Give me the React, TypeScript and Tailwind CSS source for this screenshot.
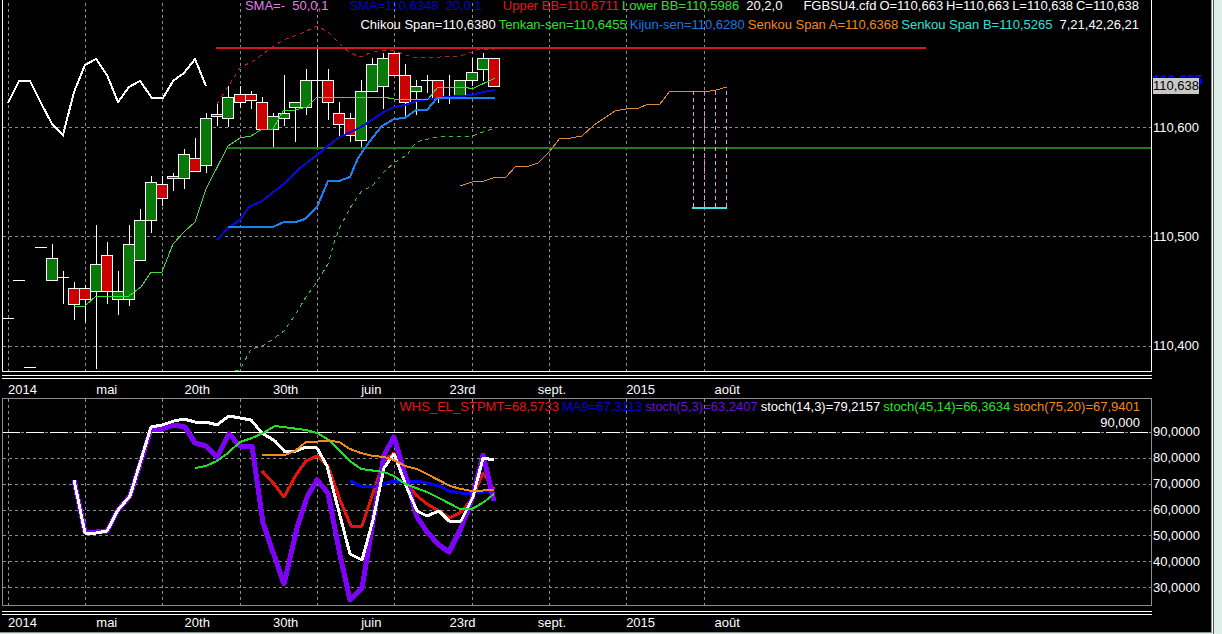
import { clsx } from 'clsx';

const timeLabels = ['2014', 'mai', '20th', '30th', 'juin', '23rd', 'sept.', '2015', 'août'];
const priceLabels = ['110,600', '110,500', '110,400'];
const stochLabels = ['90,0000', '80,0000', '70,0000', '60,0000', '50,0000', '40,0000', '30,0000'];

const gridX = [8, 85, 162, 240, 317, 394, 472, 549, 626, 704];
const priceGridY = [127, 236, 346];
const stochGridY = [432, 458, 484, 510, 535, 561, 587];

// [x, high, top, bottom, low, type] with u = up, d = down
type Candle = [number, number, number, number, number, 'u' | 'd'];

const candles: Candle[] = [
  [8, 318, 318, 318, 318, 'u'],
  [19, 280, 280, 280, 280, 'u'],
  [30, 367, 367, 367, 367, 'u'],
  [41, 247, 247, 247, 247, 'u'],
  [52, 244, 258, 280, 280, 'u'],
  [63, 271, 277, 277, 303, 'u'],
  [74, 282, 288, 304, 319, 'd'],
  [85, 285, 288, 299, 321, 'd'],
  [96, 225, 264, 291, 368, 'u'],
  [107, 242, 255, 291, 303, 'd'],
  [118, 271, 291, 299, 314, 'u'],
  [129, 225, 244, 299, 305, 'u'],
  [140, 209, 220, 260, 260, 'u'],
  [151, 176, 182, 220, 232, 'u'],
  [162, 176, 184, 198, 205, 'd'],
  [173, 173, 176, 178, 190, 'u'],
  [184, 149, 154, 178, 188, 'u'],
  [195, 138, 158, 171, 171, 'd'],
  [206, 113, 118, 165, 172, 'u'],
  [217, 102, 114, 116, 125, 'd'],
  [228, 86, 97, 118, 126, 'u'],
  [240, 86, 94, 102, 107, 'd'],
  [251, 91, 94, 100, 108, 'd'],
  [262, 97, 102, 129, 129, 'd'],
  [273, 113, 116, 129, 147, 'u'],
  [284, 75, 113, 118, 125, 'u'],
  [295, 102, 102, 107, 141, 'u'],
  [306, 69, 80, 107, 114, 'u'],
  [317, 49, 80, 80, 147, 'u'],
  [328, 69, 80, 102, 119, 'd'],
  [339, 102, 113, 124, 136, 'd'],
  [350, 113, 118, 135, 141, 'd'],
  [361, 80, 91, 140, 147, 'u'],
  [372, 58, 64, 91, 91, 'u'],
  [383, 53, 58, 86, 108, 'u'],
  [394, 53, 53, 75, 75, 'd'],
  [405, 64, 75, 102, 116, 'd'],
  [416, 80, 86, 91, 114, 'u'],
  [427, 75, 80, 80, 92, 'u'],
  [438, 80, 80, 97, 102, 'd'],
  [449, 75, 97, 97, 103, 'u'],
  [460, 80, 80, 97, 97, 'u'],
  [472, 58, 72, 80, 85, 'u'],
  [483, 53, 58, 69, 80, 'u'],
  [494, 58, 58, 86, 86, 'd'],
];

const chikou =
  '8,103 19,81 30,81 41,103 52,124 63,135 74,92 85,65 96,59 107,75 118,102 129,87 140,81 152,98 163,98 173,81 184,73 195,59 206,86';
const upperBand =
  '217,104 229,85 240,68 255,60 268,50 283,40 300,34 317,26 328,32 339,43 350,53 361,57 372,52 384,50 395,51 406,55 417,58 440,57 460,56 472,52 480,49 494,49';
const lowerBand =
  '235,370 240,370 251,349 262,346 272,340 284,331 295,315 306,297 317,282 328,264 335,240 340,227 350,208 361,192 373,185 384,172 395,162 407,155 416,142 428,139 438,137 472,136 483,132 495,128';
const tenkan =
  '74,306 85,306 96,296 129,296 141,287 151,272 162,272 173,244 184,232 195,222 206,189 228,146 240,138 251,136 262,129 273,129 283,111 295,110 307,107 317,97 383,97 394,99 428,99 438,87 465,87 472,89 495,78';
const sma =
  '217,240 228,228 240,220 249,207 262,201 285,183 300,168 317,155 338,138 361,127 384,112 394,107 405,105 417,101 428,99 438,98 460,96 472,95 483,92 495,90';
const kijun =
  '228,227 273,227 284,222 296,222 305,219 317,207 328,181 339,181 350,177 358,158 370,141 382,126 394,119 405,118 416,110 427,110 437,98 495,98';
const senkouA =
  '460,186 472,182 484,181 493,178 506,177 516,166 529,166 538,163 549,152 560,138 571,138 582,136 594,125 615,111 626,109 639,108 648,104 660,104 670,91 693,91 704,92 716,90 727,87';

const stochLines = [
  {
    name: 'whs',
    color: '#e8140c',
    width: 3,
    points:
      '262,471 274,484 284,497 296,475 306,461 317,456 328,466 340,500 351,526 362,526 375,487 384,461 394,453 406,480 416,495 427,504 439,511 450,518 461,512 472,499 483,473 494,489',
  },
  {
    name: 'ma9',
    color: '#0000ff',
    width: 3,
    points: '350,481 361,486 373,487 384,484 394,481 417,481 427,483 439,486 449,491 461,493 472,493 494,491',
  },
  {
    name: 'stoch5',
    color: '#7f00ff',
    width: 5,
    points:
      '74,480 85,532 96,532 107,531 118,510 130,496 151,429 162,429 174,425 185,427 195,443 206,446 217,457 229,434 240,446 252,446 263,523 284,584 297,528 307,497 317,480 328,493 340,555 350,600 362,588 384,455 394,437 407,481 417,517 427,532 439,545 449,552 461,528 472,499 483,455 494,501',
  },
  {
    name: 'stoch14',
    color: '#ffffff',
    width: 3,
    points:
      '74,480 85,533 96,533 107,531 118,510 130,496 151,427 162,425 174,421 184,419 195,422 206,422 217,425 229,416 240,418 251,420 262,433 275,441 285,452 296,451 306,447 317,448 327,466 350,554 362,560 373,520 384,468 394,454 407,488 417,511 427,516 439,511 449,521 461,521 473,497 483,458 494,460',
  },
  {
    name: 'stoch45',
    color: '#22e022',
    width: 2,
    points:
      '195,468 206,466 217,461 228,453 240,442 252,438 263,433 275,426 306,430 317,433 329,440 340,451 350,461 361,469 384,472 394,476 405,484 427,492 439,498 460,509 472,509 484,502 494,494',
  },
  {
    name: 'stoch75',
    color: '#f08a18',
    width: 2,
    points:
      '262,455 285,455 295,451 306,442 330,441 339,442 350,449 361,453 373,456 384,457 394,460 405,466 417,469 427,474 450,486 461,489 472,491 494,490',
  },
];

function Grid({ ys, top, bottom }: { ys: number[]; top: number; bottom: number }) {
  return (
    <g stroke="#8c8c8c" strokeDasharray="3 3">
      {gridX.map((x) => (
        <line key={x} x1={x + 0.5} x2={x + 0.5} y1={top} y2={bottom} />
      ))}
      {ys.map((y) => (
        <line key={y} x1={3} x2={1151} y1={y + 0.5} y2={y + 0.5} />
      ))}
    </g>
  );
}

function CandleShape({ candle }: { candle: Candle }) {
  const [x, high, top, bottom, low, type] = candle;
  const fill = type === 'u' ? '#087808' : '#cc0000';
  return (
    <g stroke="#ffffff">
      {low > high && <line x1={x + 0.5} x2={x + 0.5} y1={high} y2={low + 1} />}
      {top === bottom ? (
        <line x1={x - 6} x2={x + 6} y1={top + 0.5} y2={top + 0.5} />
      ) : (
        <rect x={x - 5.5} y={top + 0.5} width={11} height={bottom - top} fill={fill} />
      )}
    </g>
  );
}

function PriceChart() {
  return (
    <svg
      className="col-start-1 row-start-1 h-full w-full"
      viewBox="2 0 1149 371"
      preserveAspectRatio="none"
      shapeRendering="crispEdges"
      fill="none"
    >
      <Grid ys={priceGridY} top={3} bottom={371} />
      {candles.map((c) => (
        <CandleShape key={c[0]} candle={c} />
      ))}
      <line x1={228} x2={1151} y1={148} y2={148} stroke="#237a1c" strokeWidth={2} />
      <polyline points={upperBand} stroke="#c01c1c" strokeDasharray="4 4" />
      <polyline points={lowerBand} stroke="#30c830" strokeDasharray="4 4" />
      <polyline points={sma} stroke="#0808d8" strokeWidth={2} />
      <polyline points={kijun} stroke="#1880f0" strokeWidth={2} />
      <polyline points={tenkan} stroke="#38e038" />
      <polyline points={chikou} stroke="#ffffff" strokeWidth={2} />
      <polyline points={senkouA} stroke="#e08a38" />
      {[693, 704, 715, 726].map((x) => (
        <line key={x} x1={x + 0.5} x2={x + 0.5} y1={91} y2={207} stroke="#e890e8" strokeDasharray="4 3" />
      ))}
      <line x1={692} x2={727} y1={208} y2={208} stroke="#40e4e4" strokeWidth={2} />
      <line x1={216} x2={926} y1={48} y2={48} stroke="#d01820" strokeWidth={2} />
    </svg>
  );
}

function StochChart() {
  return (
    <svg
      className="col-start-1 row-start-1 h-full w-full"
      viewBox="2 398 1150 208"
      preserveAspectRatio="none"
      shapeRendering="crispEdges"
      strokeLinejoin="round"
      fill="none"
    >
      <Grid ys={stochGridY} top={399} bottom={605} />
      <line x1={2} x2={1151} y1={432.5} y2={432.5} stroke="#ffffff" strokeDasharray="18 6" />
      {stochLines.map((l) => (
        <polyline key={l.name} points={l.points} stroke={l.color} strokeWidth={l.width} />
      ))}
      <rect x={2.5} y={398.5} width={1149} height={207} stroke="#8c8c8c" />
    </svg>
  );
}

function TimeAxis({ className }: { className?: string }) {
  return (
    <div>
      <div className="h-1 border-y border-white" />
      <div className={clsx('grid grid-cols-13 pl-0.5', className)}>
        {timeLabels.map((label) => (
          <span key={label} className="pl-1 leading-4">
            {label}
          </span>
        ))}
      </div>
    </div>
  );
}

export default function App() {
  return (
    <div className="flex min-h-screen bg-[#deeee8] font-['Liberation_Sans',Arial,sans-serif] text-[13px] text-white">
      <main className="min-w-0 flex-1 self-start border-r border-b border-[#8a9490] bg-black pl-0.5">
        <section className="grid grid-cols-[minmax(0,1fr)_59px]">
          <div className="grid h-[372px] border-r border-b border-white shadow-[inset_1px_0_0_#fff]">
            <div className="col-start-1 row-start-1 pr-3 leading-3 whitespace-nowrap">
              <div className="flex h-[19px] justify-end gap-[3px]">
                <span className="mr-[18px] text-[#e47ee4]">SMA=-&nbsp; 50,0,1</span>
                <span className="mr-[18px] text-[#0000d8]">SMA=110,6348&nbsp; 20,0,1</span>
                <span className="text-[#e01818]">Upper BB=110,6711</span>
                <span className="text-[#2ee02e]">Lower BB=110,5986</span>
                <span className="mr-[18px] pl-1">20,2,0</span>
                <span>FGBSU4.cfd</span>
                <span>O=110,663</span>
                <span>H=110,663</span>
                <span>L=110,638</span>
                <span>C=110,638</span>
              </div>
              <div className="flex justify-end gap-[3px]">
                <span>Chikou Span=110,6380</span>
                <span className="text-[#2ee02e]">Tenkan-sen=110,6455</span>
                <span className="text-[#1c78e0]">Kijun-sen=110,6280</span>
                <span className="text-[#f08a18]">Senkou Span A=110,6368</span>
                <span className="text-[#30e0d8]">Senkou Span B=110,5265</span>
                <span className="pl-1">7,21,42,26,21</span>
              </div>
            </div>
            <PriceChart />
          </div>
          <div className="relative flex flex-col gap-[63px] pt-[105px] pl-px">
            {priceLabels.map((label) => (
              <div key={label} className="flex h-[46px] items-center">
                {label}
              </div>
            ))}
            <span className="absolute top-[72px] left-px text-[14px] leading-4 font-bold text-[#0000ff]">110,635</span>
            <span className="absolute top-[78px] left-px bg-[#c8c8c8] leading-4 text-black">110,638</span>
          </div>
        </section>
        <section className="mr-[59px] pt-[3px]">
          <TimeAxis className="h-[19px] pt-[3px]" />
        </section>
        <section className="grid grid-cols-[minmax(0,1fr)_59px]">
          <div className="grid h-[208px]">
            <div className="col-start-1 row-start-1 pt-px pr-3 text-right leading-4 whitespace-nowrap">
              <div className="flex justify-end gap-[3px]">
                <span className="text-[#e01818]">WHS_EL_STPMT=68,5733</span>
                <span className="text-[#0000d8]">MA9=67,3113</span>
                <span className="text-[#6a10d8]">stoch(5,3)=63,2407</span>
                <span>stoch(14,3)=79,2157</span>
                <span className="text-[#2ee02e]">stoch(45,14)=66,3634</span>
                <span className="text-[#f08a18]">stoch(75,20)=67,9401</span>
              </div>
              <div>90,000</div>
            </div>
            <StochChart />
          </div>
          <div className="pt-[21px] pl-px">
            {stochLabels.map((label) => (
              <div key={label} className="flex h-[26px] items-center">
                {label}
              </div>
            ))}
          </div>
        </section>
        <section className="mr-[59px] pt-[5px]">
          <TimeAxis className="h-[17px]" />
        </section>
      </main>
      <aside className="mr-2 w-0.5 border-r border-[#4c5a54] bg-white" />
    </div>
  );
}
